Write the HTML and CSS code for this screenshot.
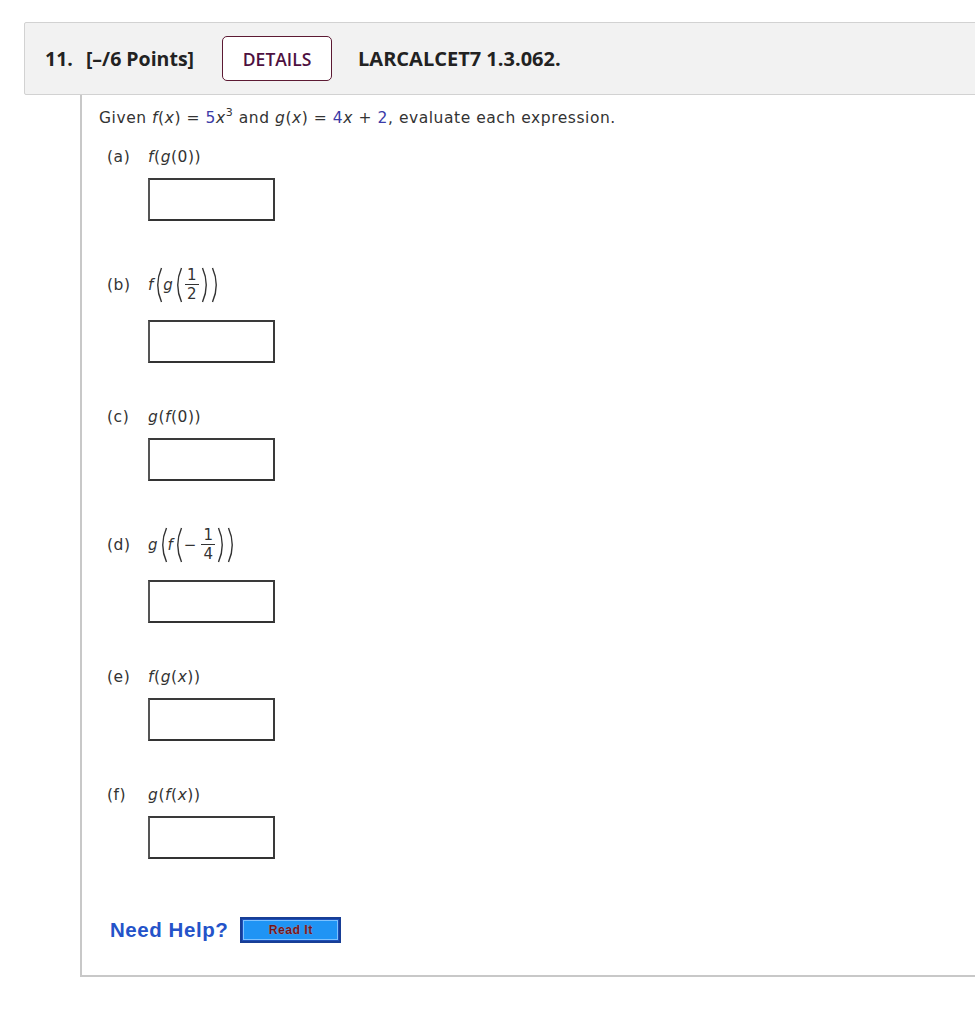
FILE: index.html
```html
<!DOCTYPE html>
<html>
<head>
<meta charset="utf-8">
<link rel="stylesheet" href="styles.css">
</head>
<body>
<div class="header">
  <span class="qnum">11.</span>
  <span class="points">[–/6 Points]</span>
  <span class="details">DETAILS</span>
  <span class="code">LARCALCET7 1.3.062.</span>
</div>
<div class="content">
  <p class="given">Given <i>f</i>(<i>x</i>) = <span class="num">5</span><i>x</i><sup>3</sup> and <i>g</i>(<i>x</i>) = <span class="num">4</span><i>x</i> + <span class="num">2</span>, evaluate each expression.</p>

  <div class="part">
    <div class="label"><span class="letter">(a)</span><span class="expr"><i>f</i>(<i>g</i>(0))</span></div>
    <div class="answer"></div>
  </div>

  <div class="part">
    <div class="label tall"><span class="letter">(b)</span><span class="expr small"><i>f</i><svg class="paren" viewBox="0 0 10 36"><path d="M8.5 1 Q1 18 8.5 35"/></svg><i>g</i><svg class="paren" viewBox="0 0 10 36"><path d="M8.5 1 Q1 18 8.5 35"/></svg><span class="frac"><span>1</span><span class="bar"></span><span>2</span></span><svg class="paren" viewBox="0 0 10 36"><path d="M1.5 1 Q9 18 1.5 35"/></svg><svg class="paren" viewBox="0 0 10 36"><path d="M1.5 1 Q9 18 1.5 35"/></svg></span></div>
    <div class="answer"></div>
  </div>

  <div class="part">
    <div class="label"><span class="letter">(c)</span><span class="expr"><i>g</i>(<i>f</i>(0))</span></div>
    <div class="answer"></div>
  </div>

  <div class="part">
    <div class="label tall"><span class="letter">(d)</span><span class="expr small"><i>g</i><svg class="paren" viewBox="0 0 10 36"><path d="M8.5 1 Q1 18 8.5 35"/></svg><i>f</i><svg class="paren" viewBox="0 0 10 36"><path d="M8.5 1 Q1 18 8.5 35"/></svg><span class="minus">−</span><span class="frac"><span>1</span><span class="bar"></span><span>4</span></span><svg class="paren" viewBox="0 0 10 36"><path d="M1.5 1 Q9 18 1.5 35"/></svg><svg class="paren" viewBox="0 0 10 36"><path d="M1.5 1 Q9 18 1.5 35"/></svg></span></div>
    <div class="answer"></div>
  </div>

  <div class="part">
    <div class="label"><span class="letter">(e)</span><span class="expr"><i>f</i>(<i>g</i>(<i>x</i>))</span></div>
    <div class="answer"></div>
  </div>

  <div class="part">
    <div class="label"><span class="letter">(f)</span><span class="expr"><i>g</i>(<i>f</i>(<i>x</i>))</span></div>
    <div class="answer"></div>
  </div>

  <div class="help">
    <span class="need">Need Help?</span>
    <span class="readit"><span>Read It</span></span>
  </div>
</div>
</body>
</html>
```
FILE: styles.css
```css
html, body {
  margin: 0;
  padding: 0;
  overflow-x: hidden;
  background: #fff;
}

.header {
  display: flex;
  align-items: center;
  margin: 22px -20px 0 24px;
  height: 71px;
  padding-left: 20px;
  background: #f2f2f2;
  border: 1px solid #d2d2d2;
  border-radius: 2px;
  font-family: "Open Sans", sans-serif;
  font-weight: 700;
  font-size: 19.5px;
  color: #222;
}

.qnum {
  margin-right: 13px;
}

.points {
  margin-right: 28px;
}

.details {
  display: flex;
  align-items: center;
  justify-content: center;
  width: 108px;
  height: 43px;
  border: 1px solid #5c1a33;
  border-radius: 5px;
  background: #fff;
  color: #4e1040;
  font-weight: 600;
  font-size: 17.5px;
  margin-right: 26px;
}

.code {
  font-size: 20px;
}

.content {
  margin: 0 -20px 0 80px;
  border-left: 2px solid #c8c8c8;
  border-bottom: 2px solid #c8c8c8;
  padding: 13px 0 32px 17px;
  font-family: "DejaVu Sans", Verdana, sans-serif;
  font-size: 15.5px;
  letter-spacing: 0.55px;
  color: #333;
}

.given {
  margin: 0 0 19px 0;
  line-height: 20px;
}

.given sup {
  font-size: 11px;
  line-height: 0;
  vertical-align: 7px;
}

.num {
  color: #3b3ba8;
}

i {
  font-style: italic;
}

.part {
  margin-bottom: 44px;
  margin-left: 8px;
}

.label {
  display: flex;
  align-items: center;
  height: 20px;
  margin-bottom: 11px;
}

.label.tall {
  height: 44px;
  margin-bottom: 13px;
}

.part:has(.tall) {
  margin-top: -2px;
}

.letter {
  width: 41px;
}

.expr {
  display: inline-flex;
  align-items: center;
}

.expr.small {
  font-size: 15px;
  letter-spacing: 0;
}

.paren {
  width: 10px;
  height: 36px;
}

.paren path {
  fill: none;
  stroke: #333;
  stroke-width: 1.4;
}

.frac {
  display: inline-flex;
  flex-direction: column;
  align-items: center;
  font-size: 15px;
  line-height: 15px;
  padding: 0 2px;
}

.frac .bar {
  width: 14px;
  height: 1px;
  background: #333;
  margin: 1px 0 2px;
}

.minus {
  margin: 0 3px 0 1px;
}

.answer {
  width: 123px;
  height: 39px;
  margin-left: 41px;
  border: 2px solid #3a3a3a;
  border-left-color: #555;
  border-bottom-color: #333;
}

.help {
  display: flex;
  align-items: center;
  margin-left: 11px;
  margin-top: 58px;
  gap: 12px;
}

.need {
  font-family: "Liberation Sans", Arial, sans-serif;
  font-weight: 700;
  font-size: 20.5px;
  color: #2453c9;
}

.readit {
  display: flex;
  width: 101px;
  height: 26px;
  box-sizing: border-box;
  border: 2px solid #173e96;
  background: #1d4fb8;
  padding: 1px;
}

.readit span {
  flex: 1;
  display: flex;
  align-items: center;
  justify-content: center;
  background: #1f94f4;
  border: 1px solid #7cc2ff;
  font-family: "Liberation Sans", Arial, sans-serif;
  font-weight: 700;
  font-size: 12px;
  color: #6a1620;
  text-shadow: 0 0 1px #f0a0a0;
}
```
